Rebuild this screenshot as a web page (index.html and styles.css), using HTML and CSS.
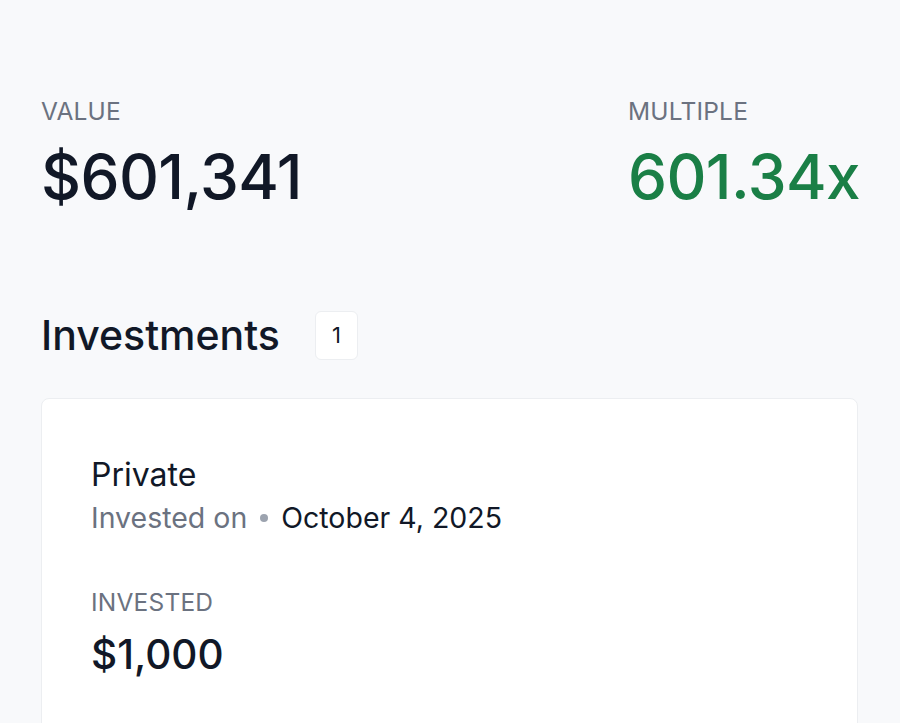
FILE: index.html
```html
<!DOCTYPE html>
<html>
<head>
<meta charset="utf-8">
<link rel="stylesheet" href="styles.css">
</head>
<body>
<main class="page">
  <section class="stats">
    <div class="stat">
      <div class="label">VALUE</div>
      <div class="big">$601,341</div>
    </div>
    <div class="stat stat-right">
      <div class="label">MULTIPLE</div>
      <div class="big green">601.34x</div>
    </div>
  </section>
  <section class="heading">
    <h2 class="title">Investments</h2>
    <span class="badge">1</span>
  </section>
  <section class="card">
    <div class="name">Private</div>
    <div class="meta"><span class="muted">Invested on</span><span class="dot"></span><span class="date">October 4, 2025</span></div>
    <div class="label small-label">INVESTED</div>
    <div class="amount">$1,000</div>
  </section>
</main>
</body>
</html>
```
FILE: styles.css
```css
html, body {
  margin: 0;
  padding: 0;
  background: #f8f9fb;
  font-family: Inter, "Noto Sans", sans-serif;
  color: #111827;
  overflow: hidden;
}
.page {
  padding: 96px 42px 0 41px;
}
.stats {
  display: flex;
  justify-content: space-between;
}
.stat-right {
  width: 230px;
}
.label {
  font-size: 24.5px;
  color: #6b7280;
  line-height: 30px;
  letter-spacing: 0.2px;
}
.big {
  font-size: 62px;
  line-height: 74px;
  margin-top: 14px;
  font-weight: 500;
  letter-spacing: -0.6px;
}
.green {
  color: #1a7f46;
}
.heading {
  display: flex;
  align-items: center;
  gap: 35px;
  margin-top: 96px;
}
.title {
  margin: 0;
  font-size: 41px;
  font-weight: 500;
  line-height: 50px;
}
.badge {
  display: flex;
  align-items: center;
  justify-content: center;
  width: 43px;
  height: 49px;
  box-sizing: border-box;
  background: #fff;
  border: 1px solid #eceef1;
  border-radius: 6px;
  font-size: 22px;
}
.card {
  margin-top: 38px;
  background: #fff;
  border: 1px solid #eceef1;
  border-radius: 8px;
  padding: 56px 49px 60px;
  height: 400px;
}
.name {
  font-size: 32px;
  line-height: 40px;
}
.meta {
  display: flex;
  align-items: center;
  font-size: 28.5px;
  line-height: 38px;
  margin-top: 4px;
}
.muted {
  color: #6b7280;
}
.dot {
  width: 8px;
  height: 8px;
  background: #9ca3af;
  border-radius: 50%;
  margin: 0 13px;
}
.small-label {
  margin-top: 50px;
}
.amount {
  font-size: 40.5px;
  line-height: 50px;
  margin-top: 13px;
  font-weight: 500;
}
```
